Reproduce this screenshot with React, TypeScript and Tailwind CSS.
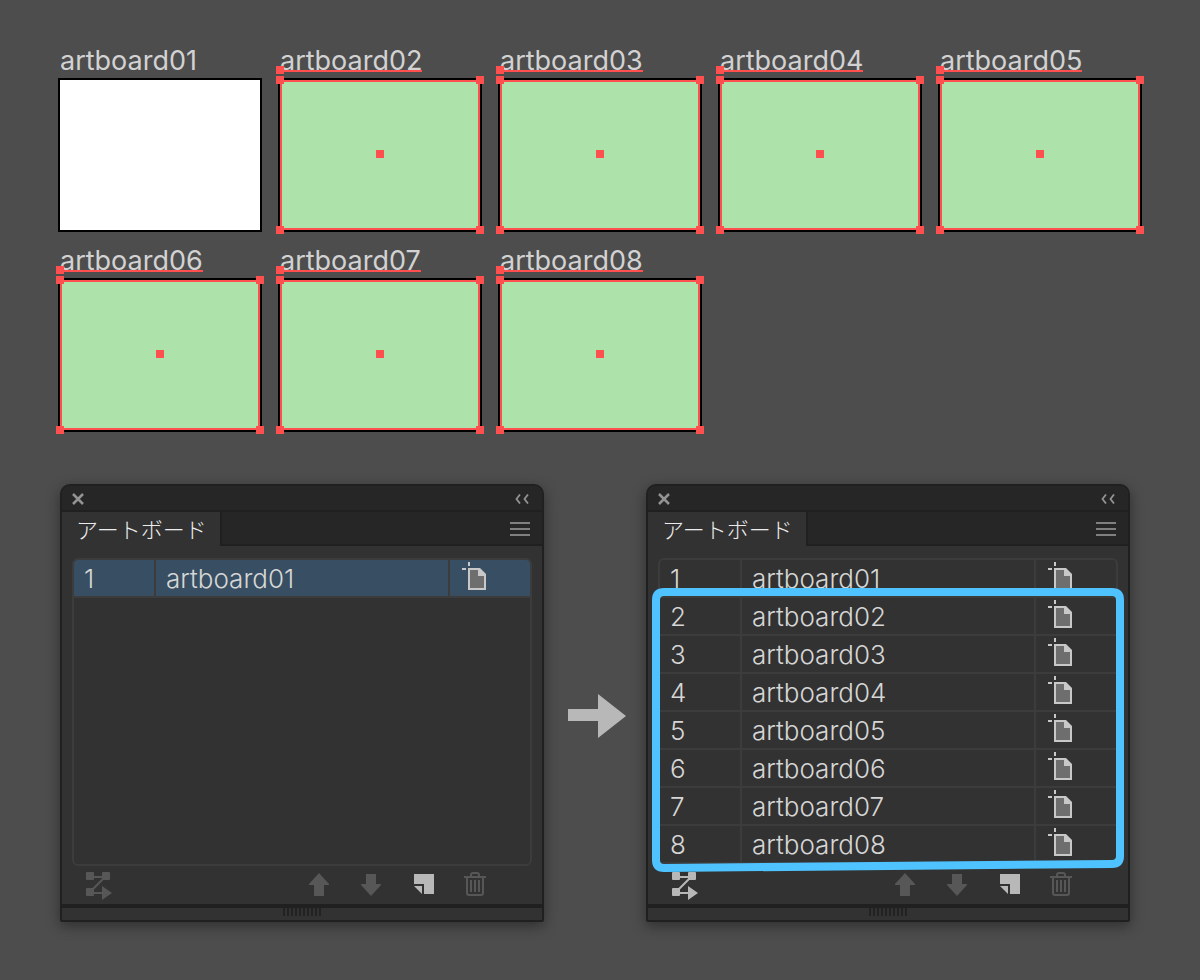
interface ArtboardProps {
  name: string;
  selected: boolean;
}

interface PanelProps {
  items: string[];
  activeIndex?: number;
  canRearrange?: boolean;
  highlighted?: boolean;
}

const artboards = [
  'artboard01',
  'artboard02',
  'artboard03',
  'artboard04',
  'artboard05',
  'artboard06',
  'artboard07',
  'artboard08',
];

function Artboard({ name, selected }: ArtboardProps) {
  return (
    <figure className="w-[204px]">
      <figcaption className="flex h-8 pl-0.5">
        <span className="relative text-[27px] leading-[30px] text-[#d2d2d2]">
          {name}
          {selected && (
            <>
              <span className="absolute top-6 right-0 left-0 h-0.5 bg-[#ff4f4f]" />
              <span className="absolute top-5 -left-1 size-2 bg-[#ff4f4f]" />
            </>
          )}
        </span>
      </figcaption>
      <div className="h-[154px] border-2 border-black bg-white">
        {selected && (
          <div className="relative h-full border-2 border-[#ff4f4f] bg-[#ade2ab]">
            <span className="absolute -top-1.5 -left-1.5 size-2 bg-[#ff4f4f]" />
            <span className="absolute -top-1.5 -right-1.5 size-2 bg-[#ff4f4f]" />
            <span className="absolute -bottom-1.5 -left-1.5 size-2 bg-[#ff4f4f]" />
            <span className="absolute -right-1.5 -bottom-1.5 size-2 bg-[#ff4f4f]" />
            <span className="absolute inset-x-0 top-0 bottom-0.5 m-auto size-2 bg-[#ff4f4f]" />
          </div>
        )}
      </div>
    </figure>
  );
}

function ArtboardIcon() {
  return (
    <svg viewBox="0 0 24 28" className="block h-7 w-6" aria-hidden="true">
      <path d="M6 0H8V4H6ZM0 6H4V8H0Z" fill="#c8c8c8" />
      <path d="M6 6H18L24 12V28H6Z" fill="#c8c8c8" />
      <path d="M8 8H16V14H22V26H8Z" fill="#6e6e6e" />
    </svg>
  );
}

function RearrangeIcon() {
  return (
    <svg viewBox="0 0 26 28" className="block h-7 w-[26px]" fill="currentColor" aria-hidden="true">
      <rect width="8" height="8" rx="1" />
      <rect x="16" width="8" height="8" rx="1" />
      <rect y="16" width="8" height="8" rx="1" />
      <path d="M16 14L26 21L16 28Z" />
      <path d="M8 5H16M8 21H16M17 7L7 17" stroke="currentColor" strokeWidth="2" />
    </svg>
  );
}

function MoveIcon({ down = false }: { down?: boolean }) {
  return (
    <svg viewBox="0 0 20 24" className="block h-6 w-5" fill="currentColor" aria-hidden="true">
      <path d={down ? 'M5 2H15V12H20V13L10 24L0 13V12H5Z' : 'M10 1L20 12V13H15V24H5V13H0V12Z'} />
    </svg>
  );
}

function NewIcon() {
  return (
    <svg viewBox="-1 0 21 20" className="block h-5 w-[21px]" fill="currentColor" aria-hidden="true">
      <path d="M0 0H20V20H10V10H0Z" />
      <path d="M0 12H8V20Z" />
    </svg>
  );
}

function TrashIcon() {
  return (
    <svg viewBox="0 0 22 24" className="block h-6 w-[22px]" fill="none" stroke="currentColor" strokeWidth="2" aria-hidden="true">
      <path d="M0 5H22M3 5V21Q3 23 5 23H17Q19 23 19 21V5M7 5V3Q7 1 9 1H13Q15 1 15 3V5" />
      <path d="M7 8V20M11 8V20M15 8V20" />
    </svg>
  );
}

function Panel({ items, activeIndex, canRearrange = false, highlighted = false }: PanelProps) {
  return (
    <section className="min-w-0 flex-1 rounded-t-[10px] rounded-b-xs border-2 border-[#202020] bg-[#323232] shadow-[0_4px_14px_rgba(0,0,0,0.4)]">
      <header className="flex h-[26px] items-center justify-between rounded-t-lg border-b-2 border-[#202020] bg-[#262626] pt-0.5 pr-[13px] pl-[10px] text-[#939393]">
        <button type="button" aria-label="閉じる">
          <svg viewBox="0 0 12 12" className="block size-3" fill="none" stroke="currentColor" strokeWidth="2.500">
            <path d="M1 1L11 11M11 1L1 11" />
          </svg>
        </button>
        <button type="button" aria-label="折りたたむ">
          <svg viewBox="0 0 14 10" className="block h-2.5 w-3.5" fill="none" stroke="currentColor" strokeWidth="1.800">
            <path d="M5 0.500L1.500 5L5 9.500M13 0.500L9.500 5L13 9.500" />
          </svg>
        </button>
      </header>

      <div className="flex h-[34px]">
        <h2 className="border-r-2 border-[#202020] pr-[13px] pl-[14px] font-['Noto_Sans_CJK_JP',sans-serif] text-[22px] leading-8 font-light whitespace-nowrap text-[#ececec]">
          アートボード
        </h2>
        <div className="flex flex-1 items-center justify-end border-b-2 border-[#202020] bg-[#262626] pt-0.5 pr-3">
          <button type="button" aria-label="メニュー" className="flex w-5 flex-col gap-1">
            <span className="h-0.5 bg-[#808080]" />
            <span className="h-0.5 bg-[#808080]" />
            <span className="h-0.5 bg-[#808080]" />
          </button>
        </div>
      </div>

      <div className="relative mx-[10px] mt-3 h-[308px] rounded-md border-2 border-[#3c3c3c]">
        <div className="h-full overflow-hidden rounded-sm">
          <table className="w-full table-fixed border-separate border-spacing-0 text-[26px] leading-[34px] font-light text-[#d6d6d6]">
            <colgroup>
              <col className="w-[82px]" />
              <col />
              <col className="w-20" />
            </colgroup>
            <tbody>
              {items.map((name, index) => (
                <tr key={name} className={index === activeIndex ? 'bg-[#384e62]' : ''}>
                  <td className="h-[38px] border-r-2 border-b-2 border-[#3c3c3c] pt-0.5 pb-0 pl-[10px]">{index + 1}</td>
                  <td className="h-[38px] border-r-2 border-b-2 border-[#3c3c3c] pt-0.5 pb-0 pl-[10px]">{name}</td>
                  <td className="h-[38px] border-b-2 border-[#3c3c3c] pt-0.5 pb-0 pl-3 align-top">
                    <ArtboardIcon />
                  </td>
                </tr>
              ))}
            </tbody>
          </table>
        </div>
        {highlighted && (
          <svg
            viewBox="0 0 472 284"
            preserveAspectRatio="none"
            className="pointer-events-none absolute top-7 -left-2 h-[284px] w-[calc(100%+16px)]"
            fill="none"
            aria-hidden="true"
          >
            <path
              d="M12 4H460Q468 4 468 12V268Q468 276 460 276L12 280Q4 280 4 272V12Q4 4 12 4Z"
              stroke="#4fc3ff"
              strokeWidth="8"
            />
          </svg>
        )}
      </div>

      <div className="flex h-[38px] items-start justify-between pt-1.5 pr-14 pl-6 text-[#575757]">
        <button type="button" aria-label="再配置" className={canRearrange ? 'text-[#b8b8b8]' : ''}>
          <RearrangeIcon />
        </button>
        <div className="flex items-center gap-8">
          <button type="button" aria-label="上に移動">
            <MoveIcon />
          </button>
          <button type="button" aria-label="下に移動">
            <MoveIcon down />
          </button>
          <button type="button" aria-label="新規アートボード" className="text-[#b8b8b8]">
            <NewIcon />
          </button>
          <button type="button" aria-label="削除" className="-ml-0.5">
            <TrashIcon />
          </button>
        </div>
      </div>

      <footer className="flex h-4 justify-center gap-0.5 border-t-4 border-[#202020]">
        {Array.from({ length: 10 }, (_, i) => (
          <span key={i} className="h-2 w-0.5 bg-[#222222]" />
        ))}
      </footer>
    </section>
  );
}

export default function App() {
  return (
    <main className="min-h-screen bg-[#4d4d4d] pt-[46px] pb-14 font-['Inter',sans-serif]">
      <div className="flex flex-wrap gap-x-4 gap-y-[14px] pr-10 pl-[58px]">
        {artboards.map((name, index) => (
          <Artboard key={name} name={name} selected={index > 0} />
        ))}
      </div>

      <div className="mt-[52px] flex items-center pr-[70px] pl-[60px]">
        <Panel items={artboards.slice(0, 1)} activeIndex={0} />
        <div className="flex w-[102px] shrink-0 justify-center pt-[26px] pl-1">
          <svg viewBox="0 0 58 44" className="h-11 w-[58px]" fill="#b8b8b8" aria-hidden="true">
            <path d="M0 15H30V0L58 22L30 44V27H0Z" />
          </svg>
        </div>
        <Panel items={artboards} canRearrange highlighted />
      </div>
    </main>
  );
}
